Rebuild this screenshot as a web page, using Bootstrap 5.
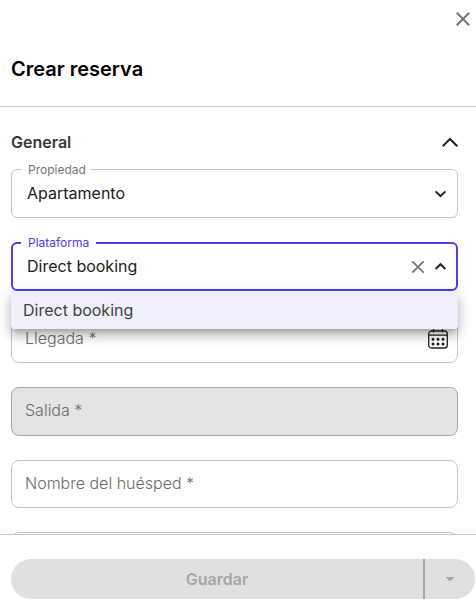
<!DOCTYPE html>
<html lang="es">
<head>
<meta charset="utf-8">
<meta name="viewport" content="width=device-width, initial-scale=1">
<title>Crear reserva</title>
<link href="https://cdn.jsdelivr.net/npm/bootstrap@5.3.0/dist/css/bootstrap.min.css" rel="stylesheet">
<style>
  body { font-family: Inter, "Noto Sans", sans-serif; font-size: 16px; line-height: 24px; color: #212121; background: #fff; }
  svg { display: block; fill: none; stroke: currentColor; }
  .icon-btn { border: 0; padding: 0; background: none; color: #212121; }
  .icon-muted { color: #757575; }
  .panel-head { padding: 8px 2px 23px 11px; border-bottom: 1px solid #c6c6c6; }
  .panel-title { font-size: 20px; line-height: 28px; font-weight: 600; color: #000; padding-top: 26px; }
  .panel-body { padding: 23px 18px 0 11px; min-height: 0; }
  .section-title { font-size: 16px; line-height: 24px; font-weight: 600; color: #383838; }
  .section-head { margin-bottom: 15px; }
  .fields { gap: 24px; }
  .box { border: 1px solid #c4c4c4; border-radius: 8px; height: 48px; background: #fff; }
  .box-select { height: 49px; border-radius: 6px; }
  .box-active { border: 2px solid #4b40ec; }
  .box-off { height: 49px; background: #e4e4e4; border-color: #a8a8a8; }
  .control { width: 100%; height: 100%; border: 0; outline: 0; background: none; padding: 0 48px 2px 15px; color: #212121; appearance: none; border-radius: 8px; }
  .box-active .control { padding-left: 14px; padding-right: 64px; }
  .float-label { position: absolute; top: -8px; left: 9px; padding: 0 4px 0 7px; font-size: 12px; line-height: 16px; color: #757575; background: #fff; }
  .box-active .float-label { top: -9px; left: 8px; padding-right: 7px; color: #4b40ec; }
  .rest-label { position: absolute; top: 10px; left: 13px; color: #6b6b6b; font-weight: 300; pointer-events: none; }
  .adorn { position: absolute; top: 0; bottom: 0; right: 9px; }
  .box-active .adorn { right: 8px; }
  .options { position: absolute; z-index: 5; top: 100%; left: 0; right: 0; margin: 2px -2px 0; padding: 0; list-style: none; border-radius: 0 0 4px 4px; overflow: hidden; }
  .options-shadow { position: absolute; z-index: 4; top: 100%; left: -2px; right: -2px; height: 38px; margin-top: 2px; border-radius: 4px; box-shadow: 0 5px 5px -3px rgba(0,0,0,.2), 0 8px 10px 1px rgba(0,0,0,.14), 0 3px 14px 2px rgba(0,0,0,.12); pointer-events: none; }
  .option { background: #f0effc; color: #424242; padding: 7px 12px; }
  .panel-foot { border-top: 1px solid #c6c6c6; padding: 24px 1px 9px 11px; background: #fff; }
  .save, .save-more { height: 40px; border: 0; background: #e0e0e0; color: #a6a6a6; font-weight: 600; }
  .save { border-radius: 20px 0 0 20px; border-right: 2px solid #a6a6a6; }
  .save-more { width: 50px; border-radius: 0 20px 20px 0; }
</style>
<script src="https://cdn.jsdelivr.net/npm/bootstrap@5.3.0/dist/js/bootstrap.bundle.min.js"></script>
</head>
<body>
<main class="d-flex flex-column vh-100 overflow-hidden">
  <header class="panel-head">
    <div class="d-flex justify-content-end">
      <button type="button" class="icon-btn icon-muted" aria-label="Cerrar">
        <svg width="22" height="21" viewBox="0 0 22 21" stroke-width="2"><path d="M4.8 4.8 17.2 17.2M17.2 4.8 4.8 17.2"/></svg>
      </button>
    </div>
    <h1 class="panel-title m-0">Crear reserva</h1>
  </header>

  <form id="booking" class="panel-body flex-grow-1 overflow-hidden">
    <div class="section-head d-flex align-items-center justify-content-between">
      <h2 class="section-title m-0">General</h2>
      <button type="button" class="icon-btn" aria-label="Contraer General">
        <svg width="16" height="16" viewBox="0 0 16 16" stroke-width="2"><path d="M.7 12.3 8 5l7.3 7.3"/></svg>
      </button>
    </div>

    <div class="fields d-flex flex-column">
      <div class="box box-select position-relative">
        <label class="float-label" for="property">Propiedad</label>
        <select id="property" class="control"><option>Apartamento</option></select>
        <span class="adorn d-flex align-items-center pe-none">
          <svg width="16" height="16" viewBox="0 0 16 16" stroke-width="2"><path d="m3.6 5.4 4.9 4.8 4.9-4.8"/></svg>
        </span>
      </div>

      <div class="box box-select box-active position-relative">
        <label class="float-label" for="platform">Plataforma</label>
        <input id="platform" class="control" type="text" value="Direct booking" role="combobox" aria-expanded="true" aria-controls="platform-list">
        <div class="adorn d-flex align-items-center gap-2">
          <button type="button" class="icon-btn icon-muted" aria-label="Borrar">
            <svg width="14" height="14" viewBox="0 0 14 14" stroke-width="1.8"><path d="m2.3 1.3 11.4 11.4m0-11.4L2.3 12.7"/></svg>
          </button>
          <button type="button" class="icon-btn" aria-label="Cerrar lista">
            <svg width="16" height="16" viewBox="0 0 16 16" stroke-width="2"><path d="m3.6 10 4.9-4.8 4.9 4.8"/></svg>
          </button>
        </div>
        <div class="options-shadow"></div>
        <ul id="platform-list" class="options" role="listbox" aria-label="Plataforma">
          <li class="option" role="option" aria-selected="true">Direct booking</li>
        </ul>
      </div>

      <div class="box position-relative">
        <label class="rest-label" for="arrival">Llegada *</label>
        <input id="arrival" class="control" type="text" required>
        <div class="adorn d-flex align-items-center">
          <button type="button" class="icon-btn" aria-label="Elegir fecha">
            <svg width="20" height="20" viewBox="0 0 20 20" stroke-width="1.3"><rect x=".7" y="2" width="18.6" height="17" rx="3"/><path d="M1 6.2h18M5.5 0v3.6M14.5 0v3.6"/><path d="M5 10.2h.01M10 10.2h.01M15 10.2h.01M5 15h.01M10 15h.01M15 15h.01" stroke-width="3" stroke-linecap="round"/></svg>
          </button>
        </div>
      </div>

      <div class="box box-off position-relative">
        <label class="rest-label" for="departure">Salida *</label>
        <input id="departure" class="control" type="text" disabled>
      </div>

      <div class="box position-relative">
        <label class="rest-label" for="guest">Nombre del huésped *</label>
        <input id="guest" class="control" type="text" required>
      </div>

      <div class="box">
        <input class="control" type="email" aria-label="Email">
      </div>
    </div>
  </form>

  <footer class="panel-foot d-flex">
    <button type="submit" form="booking" class="save flex-grow-1" disabled>Guardar</button>
    <button type="button" class="save-more d-flex align-items-center justify-content-center" aria-label="Más opciones" disabled>
      <svg width="10" height="5" viewBox="0 0 10 5"><path d="M.5 0h9L5 4.6z" fill="currentColor" stroke="none"/></svg>
    </button>
  </footer>
</main>
</body>
</html>
